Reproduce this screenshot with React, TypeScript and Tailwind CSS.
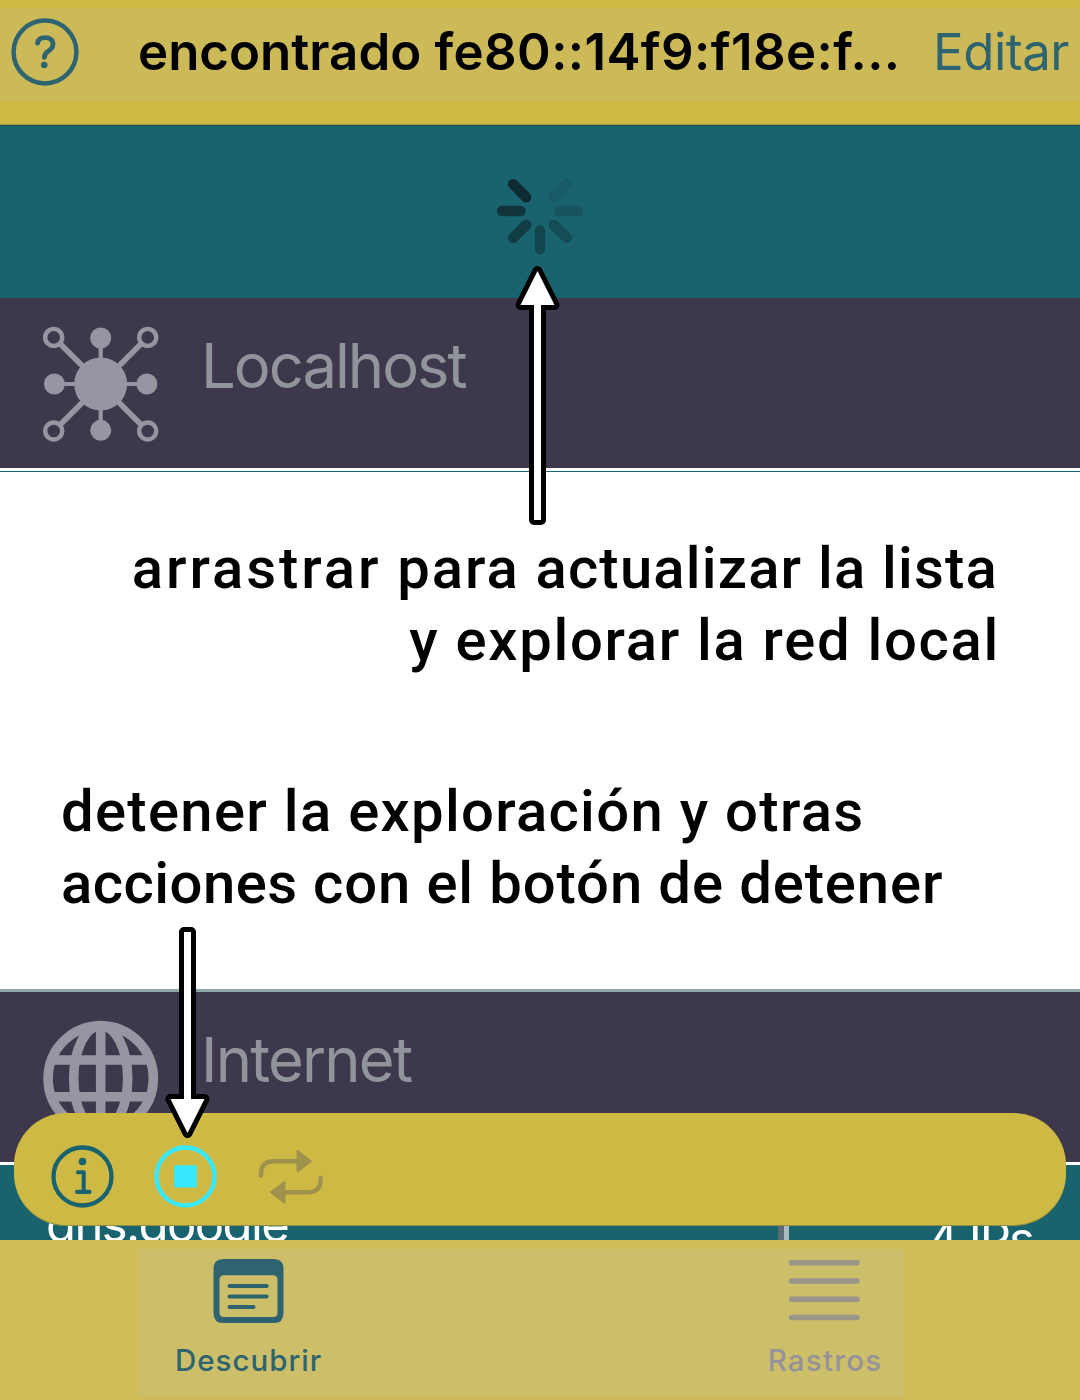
import React from "react";

const spokes = [
  { angle: 45, color: "#185a65" },
  { angle: 90, color: "#17545f" },
  { angle: 135, color: "#154d57" },
  { angle: 180, color: "#13454f" },
  { angle: 225, color: "#113d46" },
  { angle: 270, color: "#10343c" },
  { angle: 315, color: "#0e2b32" },
];

function Spinner() {
  return (
    <svg className="h-[90px] w-[90px]" viewBox="-45 -45 90 90" strokeWidth="10.500" strokeLinecap="round">
      {spokes.map((s) => (
        <path key={s.angle} d="M0 -19.500V-38" stroke={s.color} transform={`rotate(${s.angle})`} />
      ))}
    </svg>
  );
}

function HelpIcon() {
  return (
    <svg className="h-[68px] w-[68px] shrink-0" viewBox="0 0 68 68" fill="none" stroke="#2e6470">
      <circle cx="34" cy="34" r="31.400" strokeWidth="4.500" />
      <path d="M26.600 25.200C27 21.600 29.600 19.600 34 19.600c4.900 0 8 2.600 8 6.700 0 3-1.500 4.800-4.500 6.700-3.100 1.900-4.200 3.300-4.200 6.400" strokeWidth="4.800" strokeLinecap="round" />
      <circle cx="33.200" cy="47" r="3.300" fill="#2e6470" stroke="none" />
    </svg>
  );
}

function HubIcon() {
  return (
    <svg className="h-[116px] w-[116px] shrink-0" viewBox="43.100 326 116 116" fill="none" stroke="#9696a3">
      <path d="M60 343.500L88 371.500M141.500 343.500L113.500 371.500M60 425L88 397M141.500 425L113.500 397" strokeWidth="5.600" />
      <path d="M100.800 338V430M54 384H147" strokeWidth="4.200" />
      <g fill="#9696a3" stroke="none">
        <circle cx="100.800" cy="384" r="26.500" />
        <circle cx="100.800" cy="338" r="10.500" />
        <circle cx="100.800" cy="430.300" r="10.500" />
        <circle cx="54.500" cy="384" r="10.500" />
        <circle cx="147" cy="384" r="10.500" />
      </g>
      <g strokeWidth="4.400">
        <circle cx="53.800" cy="337.400" r="8.500" />
        <circle cx="147.800" cy="337.400" r="8.500" />
        <circle cx="53.800" cy="431" r="8.500" />
        <circle cx="147.800" cy="431" r="8.500" />
      </g>
    </svg>
  );
}

function GlobeIcon() {
  return (
    <svg className="h-[116px] w-[116px] shrink-0" viewBox="-57.700 -58.400 116 116" fill="none" stroke="#9696a3" strokeWidth="9.600">
      <circle r="52.600" />
      <ellipse rx="27" ry="52.800" />
      <path d="M0 -54V54M-49 -18.400H49M-49 18.400H49" />
    </svg>
  );
}

function InfoIcon() {
  return (
    <svg className="h-[63px] w-[63px]" viewBox="-31.500 -31.500 63 63" fill="none" stroke="#19636f" strokeLinecap="round" strokeLinejoin="round">
      <circle r="29" strokeWidth="4.300" />
      <path d="M-4.500 -4.200H1.200V15.400M-5.400 15.400H7" strokeWidth="4.100" />
      <circle cy="-15" r="3.800" fill="#19636f" stroke="none" />
    </svg>
  );
}

function StopIcon() {
  return (
    <svg className="h-[63px] w-[63px]" viewBox="-31.500 -31.500 63 63">
      <circle r="29" fill="none" stroke="#38e8ff" strokeWidth="4.400" />
      <rect x="-11.500" y="-11.300" width="22.800" height="22.400" rx="1.500" fill="#38e8ff" />
    </svg>
  );
}

function RepeatIcon() {
  return (
    <svg className="h-[56px] w-[66px]" viewBox="258.500 1148.500 66 56" fill="none" stroke="#9e924d" strokeWidth="4.400" strokeLinecap="round" strokeLinejoin="round">
      <path d="M261.500 1175V1173C261.500 1165 266 1160.700 273.500 1160.700H298" />
      <path d="M321.200 1177.500V1179C321.200 1187 317 1191.700 309.500 1191.700H284" />
      <g fill="#9e924d" strokeWidth="2">
        <path d="M298 1150.500V1171L311.300 1160.700Z" />
        <path d="M285 1181.800V1202L271.500 1191.700Z" />
      </g>
    </svg>
  );
}

function WindowIcon() {
  return (
    <svg className="h-[64px] w-[71px]" viewBox="0 0 71 64">
      <path fill="#2e6470" fillRule="evenodd" d="M10 0H61Q70.500 0 70.500 10V54Q70.500 64 61 64H10Q.5 64 .5 54V10Q.5 0 10 0ZM11 16.300Q6.500 16.300 6.500 21V53.500Q6.500 58 11 58H60Q64.500 58 64.500 53.500V21Q64.500 16.300 60 16.300Z" />
      <path d="M16.500 27H53.700M16.500 37.400H53.700M16.500 48H40.500" stroke="#2e6470" strokeWidth="4" strokeLinecap="round" />
    </svg>
  );
}

function LinesIcon() {
  return (
    <svg className="h-[64px] w-[72px]" viewBox="0 0 72 64" stroke="#9b958a" strokeWidth="5.500" strokeLinecap="round">
      <path d="M3.500 3.700H69M3.500 22H69M3.500 40.300H69M3.500 58.500H69" />
    </svg>
  );
}

const sans = "font-['Inter',sans-serif]";

export default function App() {
  return (
    <div className={`relative flex h-[1400px] w-[1080px] flex-col overflow-hidden bg-white ${sans}`}>
      <header className="h-[125px] shrink-0 border-b border-[#a69a40] bg-[#cfb945] pt-2">
        <div className="h-[93px] bg-[#ccba59]">
          <div className="flex h-[87px] items-center whitespace-nowrap text-[51px] leading-[87px]">
            <div className="ml-[11px] mr-[59px] flex pt-px"><HelpIcon /></div>
            <h1 className="w-[795px] shrink-0 font-semibold tracking-[0.400px] text-black">
              <span className="tracking-[0px]">encontrado</span> fe80::14f9:f18e:f...
            </h1>
            <span className="shrink-0 tracking-[-0.500px] text-[#2e6470]">Editar</span>
          </div>
        </div>
      </header>

      <div className="flex h-[173px] shrink-0 justify-center border-t border-[#155058] bg-[#19636f] pt-[40px]">
        <Spinner />
      </div>

      <section className="flex h-[170px] shrink-0 bg-[#3d384b] pl-[43px] pt-7">
        <HubIcon />
        <h2 className="-mt-[27px] ml-[42px] text-[61.500px] leading-[134px] tracking-[-2px] text-[#91959b]">Localhost</h2>
      </section>
      <div className="h-[4px] shrink-0 border-b border-[#19636f] bg-white" />

      <main className="flex h-[517px] shrink-0 flex-col whitespace-nowrap pt-[60px] font-['Roboto',sans-serif] text-[58px] font-medium leading-[72px] text-black">
        <div className="flex flex-col items-end pr-[82px]">
          <p className="tracking-[1.200px]">
            <span className="tracking-[3px]">arrastrar</span> <span className="tracking-[2px]">para</span> actualizar la lista
          </p>
          <p className="-mr-[2px] tracking-[1.700px]">y explorar la red local</p>
        </div>
        <div className="mt-[99px] flex flex-col items-start pl-[61px]">
          <p className="tracking-[1.300px]">detener la exploración y otras</p>
          <p className="tracking-[0.880px]">
            <span className="tracking-[0.500px]">acciones</span> con el botón de detener
          </p>
        </div>
      </main>

      <section className="flex h-[176px] shrink-0 border-b-[3px] border-t-[3px] border-b-white border-t-[#91a6aa] bg-[#3d384b] pl-[43px] pt-7">
        <GlobeIcon />
        <h2 className="-mt-[27px] ml-[42px] text-[61.500px] leading-[134px] tracking-[-1.800px] text-[#91959b]">Internet</h2>
      </section>

      <div className="flex h-[75px] shrink-0 overflow-hidden bg-[#19636f] text-white">
        <div className="w-[778px] shrink-0 pl-[46px] pt-[28px] text-[49px] leading-[64px] tracking-[-1.600px]">dns.google</div>
        <div className="w-[11px] shrink-0 border-l-[6px] border-[#5d6b75] bg-[#a8bcc0]" />
        <div className="grow whitespace-nowrap pr-[47px] pt-[43px] text-right text-[49px] leading-[64px] tracking-[-2px]">4 IPs</div>
      </div>

      <nav className="flex h-[160px] shrink-0 bg-[#d0bd59] pl-[138px] pt-[9px]">
        <div className="flex h-[148px] w-[766px] justify-between bg-[#cdbf69] pt-[10px] text-[29.500px] font-medium leading-[34px]">
          <div className="flex w-[221px] flex-col items-center gap-[20px] text-[#2e6470]">
            <WindowIcon />
            <span className="tracking-[1px]">Descubrir</span>
          </div>
          <div className="flex w-[160px] flex-col items-center gap-[20px] text-[#95929a]">
            <LinesIcon />
            <span className="pl-[2px] tracking-[1.200px]">Rastros</span>
          </div>
        </div>
      </nav>

      <div className="absolute left-[14px] top-[1113px] flex h-[113px] w-[1052px] items-center rounded-[52px] border-b border-[#8e8e3f] bg-[#cfb945] pl-[37px] pt-[15px]">
        <InfoIcon />
        <div className="ml-[40px]"><StopIcon /></div>
        <div className="ml-[41px]"><RepeatIcon /></div>
      </div>

      <svg className="absolute left-[513px] top-[263px] h-[264px] w-[50px]" viewBox="513 263 50 264" fill="#fff" stroke="#000" strokeWidth="10" strokeLinejoin="round" paintOrder="stroke">
        <path d="M537.500 271L554.500 305H541V520H534V305H520.500Z" />
      </svg>
      <svg className="absolute left-[163px] top-[925px] h-[216px] w-[50px]" viewBox="163 925 50 216" fill="#fff" stroke="#000" strokeWidth="10" strokeLinejoin="round" paintOrder="stroke">
        <path d="M187.500 1133L204.500 1099H191V932H184V1099H170.500Z" />
      </svg>
    </div>
  );
}
